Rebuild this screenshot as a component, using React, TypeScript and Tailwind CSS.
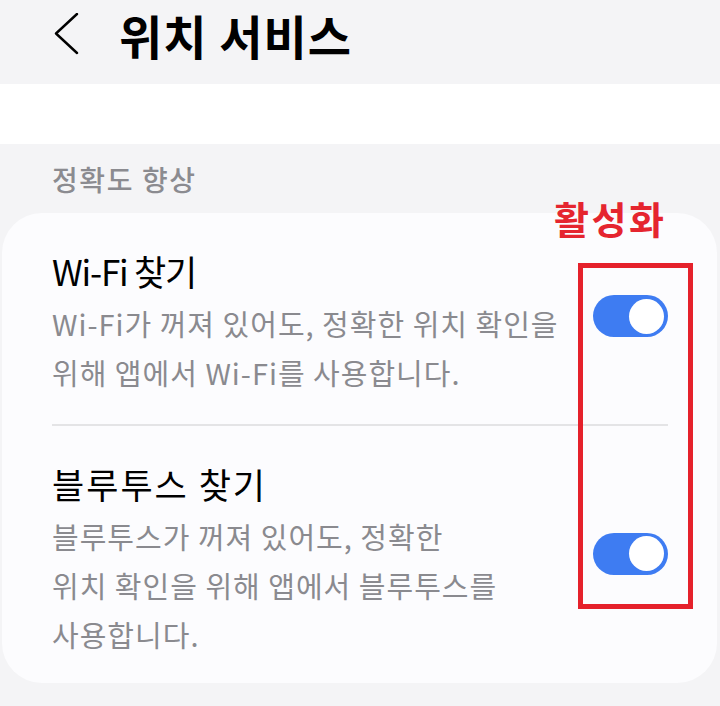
const font = { fontFamily: '"Noto Sans CJK KR", "Noto Sans", sans-serif' };

function Toggle() {
  return (
    <div className="flex h-[42px] w-[75px] shrink-0 items-center justify-end rounded-full bg-[#3e7cf2] pr-[4px]">
      <div className="h-[35px] w-[35px] rounded-full bg-white" />
    </div>
  );
}

type Row = { title: string; titleClass: string; lines: string[] };

const rows: Row[] = [
  {
    title: "Wi-Fi 찾기",
    titleClass: "tracking-[-1.2px]",
    lines: ["Wi-Fi가 꺼져 있어도, 정확한 위치 확인을", "위해 앱에서 Wi-Fi를 사용합니다."],
  },
  {
    title: "블루투스 찾기",
    titleClass: "tracking-[2px]",
    lines: ["블루투스가 꺼져 있어도, 정확한", "위치 확인을 위해 앱에서 블루투스를", "사용합니다."],
  },
];

export default function App() {
  return (
    <div className="relative h-[706px] w-[720px] overflow-hidden bg-[#f4f4f6]" style={font}>
      {/* header */}
      <div className="flex h-[84px] items-start bg-[#f4f4f6] pl-[54px] pt-[12px]">
        <svg width="26" height="42" viewBox="0 0 26 42" fill="none" className="mt-[1px]">
          <polyline points="23,1 2,20.5 23,40" stroke="#000" strokeWidth="2.4" strokeLinecap="round" strokeLinejoin="round" />
        </svg>
        <h1 className="ml-[39px] text-[47px] font-bold leading-[46px] tracking-[1px] text-black">
          위치 서비스
        </h1>
      </div>
      <div className="h-[60px] bg-white" />

      <div className="px-[52px] pt-[17px] pb-[16px] text-[28px] font-medium leading-[36px] tracking-[1.6px] text-[#8b8b90]">
        정확도 향상
      </div>

      <div className="ml-[2px] mr-[3px] rounded-[40px] bg-[#fcfcfe] pl-[50px] pr-[49px] pt-[36px] pb-[24px]">
        {rows.map((r, i) => (
          <div key={r.title}>
            {i > 0 && <div className="mt-[27px] mb-[36px] h-[2px] bg-[#e4e4e6]" />}
            <div className="flex items-center gap-4">
              <div className="flex-1">
                <div className={`text-[35px] leading-[44px] text-black ${r.titleClass}`}>{r.title}</div>
                <div className="mt-[6px] text-[29px] leading-[49px] tracking-[1px] text-[#8a8a8f]">
                  {r.lines.map((l) => (
                    <div key={l} className="whitespace-nowrap">{l}</div>
                  ))}
                </div>
              </div>
              <div className="mb-[14px]">
                <Toggle />
              </div>
            </div>
          </div>
        ))}
      </div>

      {/* annotation overlay */}
      <div className="absolute left-[554px] top-[195px] text-[38px] font-bold leading-[46px] tracking-[2.5px] text-[#e5252f]">
        활성화
      </div>
      <div className="absolute left-[578px] top-[263px] h-[346px] w-[115px] border-[5px] border-[#e5212b]" />
    </div>
  );
}
